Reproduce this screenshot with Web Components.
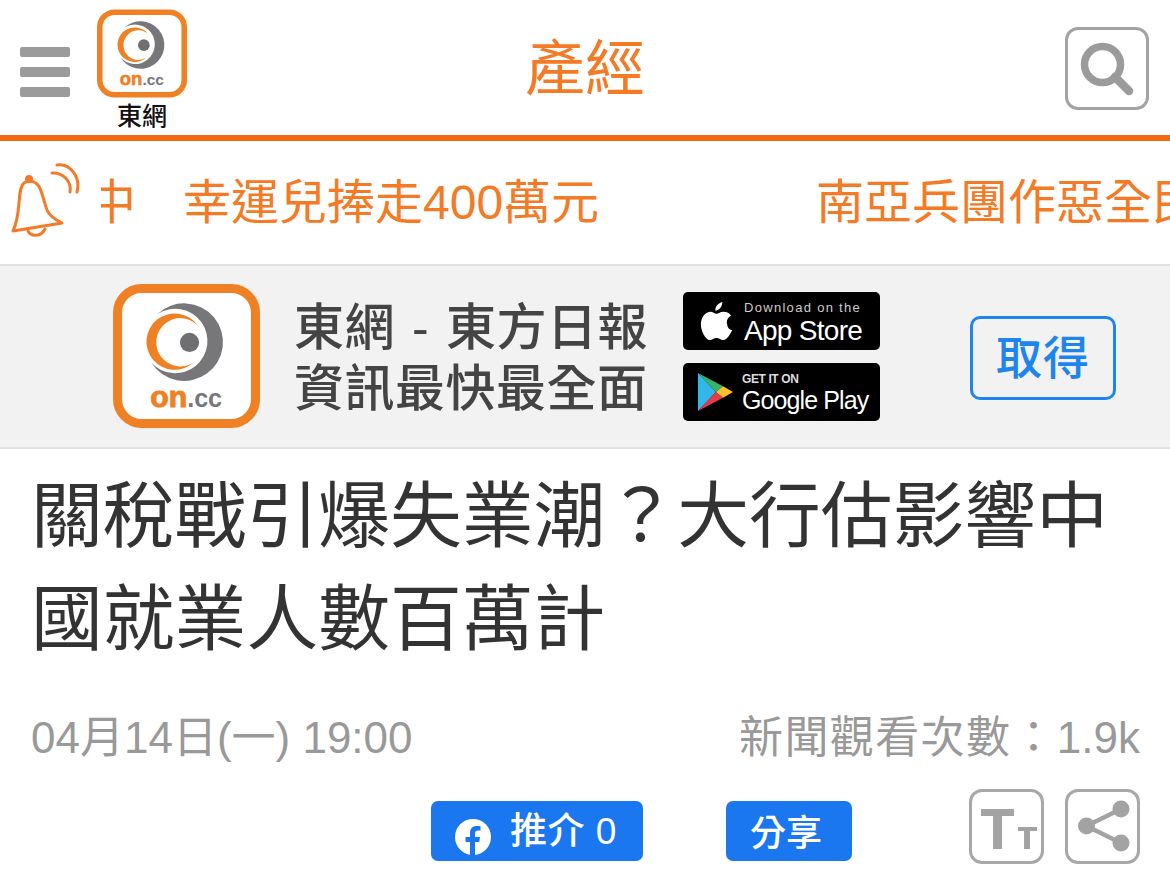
<!DOCTYPE html>
<html lang="zh-Hant"><head><meta charset="utf-8"><title>產經</title>
<style>
html,body{margin:0;padding:0;background:#fff}
body{width:1170px;height:887px;overflow:hidden;font-family:"Liberation Sans","Noto Sans CJK TC",sans-serif}
</style></head><body>
<app-header></app-header>
<news-ticker></news-ticker>
<app-banner></app-banner>
<article-head></article-head>
<script>
const LOGO=`<svg viewBox="0 0 146 143" width="100%" height="100%" style="display:block">
<rect x="4.500" y="4.500" width="137" height="134" rx="24" fill="#fff" stroke="#f08024" stroke-width="9"/>
<path d="M44 30A38.500 38.500 0 1 1 38 78A32 32 0 1 0 44 30Z" fill="#77777a"/>
<path d="M84 41A28 28 0 1 0 80 78A24 24 0 1 1 84 41Z" fill="#f08024"/>
<circle cx="76" cy="58" r="9.500" fill="#6f6f72"/>
<text x="37" y="122" font-family="Liberation Sans" font-weight="700"><tspan font-size="30" fill="#f08024" stroke="#f08024" stroke-width="1">on</tspan><tspan font-size="25" fill="#77777a">.cc</tspan></text>
</svg>`;
class Base extends HTMLElement{
  connectedCallback(){ if(!this.shadowRoot){this.attachShadow({mode:'open'}).innerHTML=this.markup();} }
}
customElements.define('on-logo',class extends Base{markup(){return `<style>:host{display:block;width:var(--s,90px);height:var(--h,90px)}</style>${LOGO}`}});
customElements.define('app-header',class extends Base{markup(){return `<style>
:host{display:grid;grid-template-columns:1fr auto 1fr;height:135px;border-bottom:6px solid #f26a10;box-sizing:content-box;font-family:inherit}
.l{display:flex;align-items:flex-start}
.burger{display:flex;flex-direction:column;gap:10px;margin:47px 0 0 20px;width:50px}
.burger i{display:block;height:10px;border-radius:2px;background:#9b9b9b}
.brand{margin:9px 0 0 27px;width:90px;display:flex;flex-direction:column;align-items:center}
on-logo{--s:90px;--h:89px}
.cap{font-size:25px;line-height:30px;font-weight:500;color:#111;margin-top:3px}
h1{margin:0;font-size:60px;font-weight:400;line-height:139px;height:135px;color:#f57a26}
.r{display:flex;justify-content:flex-end;padding:27px 21px 0 0}
.search{width:84px;height:83px;box-sizing:border-box;border:3px solid #a3a3a3;border-radius:13px;display:flex;align-items:center;justify-content:center}
.search svg{margin-left:2px}
</style>
<div class="l"><div class="burger"><i></i><i></i><i></i></div><div class="brand"><on-logo></on-logo><div class="cap">東網</div></div></div>
<h1>產經</h1>
<div class="r"><div class="search"><svg width="60" height="60" viewBox="0 0 60 60"><circle cx="24.500" cy="25.500" r="18" fill="none" stroke="#9b9b9b" stroke-width="7.500"/><path d="M37 38L51 52" stroke="#9b9b9b" stroke-width="8.500" stroke-linecap="round"/></svg></div></div>`}});
customElements.define('news-ticker',class extends Base{markup(){return `<style>
:host{display:flex;height:123px;align-items:center;overflow:hidden;color:#f57a26;font-size:48px;box-sizing:border-box}
svg{flex:none;margin:-3px 0 0 10px;display:block}
.clip{flex:1;min-width:0;overflow:hidden;margin-left:21px;height:70px}
.track{display:flex;white-space:nowrap;line-height:70px;margin-left:-13px}
.a{margin-left:47px}.b{margin-left:217px}
</style>
<svg width="70" height="76" viewBox="0 0 70 76" fill="none" stroke="#f47a28" stroke-width="3" stroke-linecap="round" stroke-linejoin="round">
<path d="M3 68L52 60C44 56 39 52 37 47C34 39 32 27 28 22C25 18 18 17 14 20C10 23 10 30 9 40C8 52 7 60 3 68Z"/>
<circle cx="19" cy="16" r="4" fill="#f47a28" stroke="none"/>
<path d="M18 68C21 74 31 74 35 66"/>
<path d="M42 10C52 9 62 18 60 29"/><path d="M47 2C60 0 71 14 67 29"/>
</svg>
<div class="clip"><div class="track"><span>中</span><span class="a">幸運兒捧走400萬元</span><span class="b">南亞兵團作惡全民</span></div></div>`}});
customElements.define('store-badge',class extends Base{markup(){
 const play=this.getAttribute('kind')==='play';
 const icon=play?`<svg width="36" height="40" viewBox="0 0 36 42" preserveAspectRatio="none" style="flex:none">
<path d="M1 1L19 21L1 41Z" fill="#2fb8e8"/><path d="M1 1L26 15L19 21Z" fill="#38b56a"/><path d="M1 41L26 27L19 21Z" fill="#e8394a"/><path d="M26 15L36 21L26 27L19 21Z" fill="#fbc02d"/></svg>`
 :`<svg width="33" height="39" viewBox="0 0 32 40" style="flex:none"><path fill="#fff" d="M22 1C22 6 18 10 15 10C14 6 18 2 22 1ZM23 11C26 11 29 12 31 15C27 17 26 21 27 24C27 27 29 29 32 30C30 35 26 40 23 40C20 40 19 38 16 38C13 38 12 40 9 40C5 40 0 31 0 24C0 16 5 11 10 11C12 11 14 13 16 13C18 13 20 11 23 11Z"/></svg>`;
 const t=play?`<div class="a" style="font-size:12px;line-height:14px;font-weight:700;letter-spacing:-.4px;color:#ddd;margin-top:3px">GET IT ON</div><div class="b" style="font-size:25px;line-height:28px;letter-spacing:-.9px">Google Play</div>`
 :`<div class="a" style="font-size:13px;line-height:14px;letter-spacing:1.300px;color:#ccc;margin-top:5px">Download on the</div><div class="b" style="font-size:28px;line-height:31px;letter-spacing:-.7px">App Store</div>`;
 return `<style>:host{display:flex;width:197px;height:58px;background:#000;border-radius:5px;align-items:center;box-sizing:border-box;padding-left:${play?14:17}px;gap:${play?9:11}px;color:#fff}
 .a,.b{white-space:nowrap}</style>${icon}<div>${t}</div>`}});
customElements.define('app-banner',class extends Base{markup(){return `<style>
:host{display:flex;height:185px;box-sizing:border-box;background:#f2f2f2;border-top:2px solid #e0e0e0;border-bottom:2px solid #e0e0e0;align-items:center;padding-left:113px}
on-logo{--s:147px;--h:144px;flex:none;margin-top:-2px}
.t{margin-left:34px;width:355px;font-size:50px;line-height:61px;color:#444;white-space:nowrap;flex:none;letter-spacing:.5px;word-spacing:2.500px;padding-top:4px;font-weight:500}
.s{display:flex;flex-direction:column;gap:13px;margin-left:34px;margin-top:-1px}
.get{margin-left:90px;width:146px;height:84px;box-sizing:border-box;border:3px solid #1f85ee;border-radius:10px;color:#1f85ee;font-size:46px;font-weight:500;display:flex;align-items:center;justify-content:center;margin-top:3px;letter-spacing:1px;line-height:1}
</style><on-logo></on-logo><div class="t">東網 - 東方日報<br>資訊最快最全面</div>
<div class="s"><store-badge></store-badge><store-badge kind="play"></store-badge></div><div class="get">取得</div>`}});
customElements.define('article-head',class extends Base{markup(){return `<style>
:host{display:block;padding:0 30px 0 34px;font-family:inherit}
h2{margin:16px 0 0 -3px;font-weight:400;font-size:71.800px;line-height:103px;color:#333;width:1100px}
.meta{display:flex;justify-content:space-between;margin-top:37px;font-size:44px;line-height:60px;color:#999;margin-left:-3px}
.w{letter-spacing:1.400px}
.acts{display:flex;align-items:flex-start;margin-top:21px;padding-left:397px}
.fb,.sh{height:60px;border-radius:7px;background:#1a77f0;color:#fff;display:flex;align-items:center;font-size:37px;margin-top:12px;font-weight:500;box-sizing:border-box}
.fb{width:212px;padding-left:24px;gap:19px;letter-spacing:.5px}
.fb svg{margin-top:11px;flex:none}
.fb span{margin-top:-6px}
.sh{width:126px;margin-left:83px;justify-content:center;letter-spacing:0;font-size:36px;padding:0 6px 2px 0}
.box{width:75px;height:75px;box-sizing:border-box;border:3px solid #a8a8a8;border-radius:13px;display:block}
.box svg{display:block}
.b1{margin-left:117px}.b2{margin-left:21px}
</style>
<h2>關稅戰引爆失業潮？大行估影響中國就業人數百萬計</h2>
<div class="meta"><span>04月14日(一) 19:00</span><span><span class="w">新聞觀看次數：</span>1.9k</span></div>
<div class="acts">
<div class="fb"><svg width="36" height="36" viewBox="0 0 36 36"><circle cx="18" cy="18" r="18" fill="#fff"/><path d="M15 36V23H10.500V18H15V14C15 9.500 17.500 7 22 7C23.500 7 25 7.200 25.500 7.300V11.500H23C21 11.500 20 12.500 20 14.500V18H25L24.200 23H20V36Z" fill="#1a77f0"/></svg><span>推介 0</span></div>
<div class="sh">分享</div>
<div class="box b1"><svg width="69" height="69" viewBox="0 0 69 69" fill="#a3a3a3"><path d="M9 17H42V24H30V57H21V24H9Z"/><path d="M46 35H65V39H58V57H52V39H46Z"/></svg></div>
<div class="box b2"><svg width="69" height="69" viewBox="0 0 69 69" fill="#a3a3a3"><path d="M53 17L18.500 34L53 51" fill="none" stroke="#a3a3a3" stroke-width="4.500"/><circle cx="53" cy="17" r="8.500"/><circle cx="18.500" cy="34" r="8.500"/><circle cx="53" cy="51" r="8.500"/></svg></div>
</div>`}});
</script>
</body></html>
